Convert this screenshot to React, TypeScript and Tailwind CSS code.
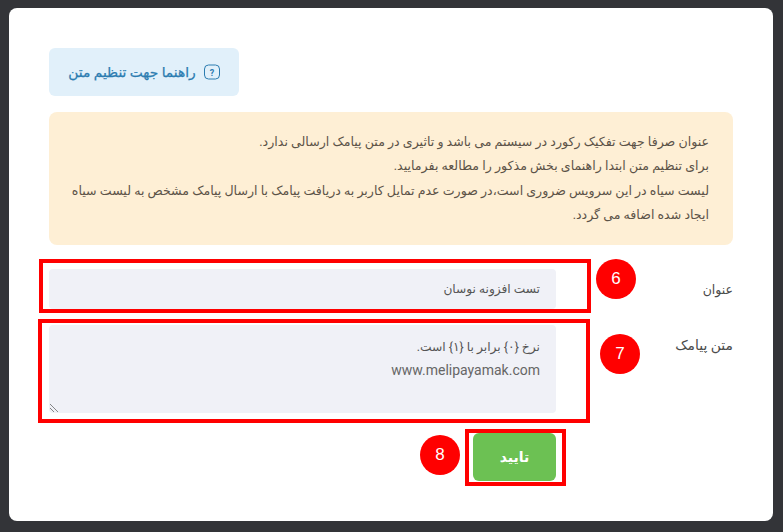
export default function App() {
  const font = "font-['Roboto','DejaVu_Sans',sans-serif]";
  return (
    <div dir="rtl" className={`relative w-[783px] h-[532px] overflow-hidden bg-[#333438] pt-2 pl-[9px] pr-[10px] pb-[11px] ${font}`}>
      <div className="h-full rounded-[8px] bg-white pt-10 pl-10 pr-10 pb-10">
        <div dir="ltr" className="flex">
          <div dir="rtl" className="flex h-12 w-[190px] items-center justify-center gap-2 rounded-[6px] bg-[#e1f0fa] text-[13.8px] text-[#2b7cb0] [-webkit-text-stroke:0.25px_#2b7cb0]">
            <svg className="shrink-0" width="16" height="16" viewBox="0 0 16 16" fill="none" stroke="#2b7cb0">
              <rect x="0.5" y="1" width="15" height="14" rx="4" strokeWidth="1" />
              <text x="8" y="11.5" fontSize="9" fontWeight="700" fill="#2b7cb0" stroke="none" textAnchor="middle">?</text>
            </svg>
            <span>راهنما جهت تنظیم متن</span>
          </div>
        </div>
        <div className="mt-4 rounded-[8px] bg-[#feefd5] pr-6 pl-4 py-[17.5px] text-[12.6px] leading-[24.5px] text-[#5c5348]">
          <p>عنوان صرفا جهت تفکیک رکورد در سیستم می باشد و تاثیری در متن پیامک ارسالی ندارد.</p>
          <p>برای تنظیم متن ابتدا راهنمای بخش مذکور را مطالعه بفرمایید.</p>
          <p>لیست سیاه در این سرویس ضروری است،در صورت عدم تمایل کاربر به دریافت پیامک با ارسال پیامک مشخص به لیست سیاه ایجاد شده اضافه می گردد.</p>
        </div>
        <div className="mt-6 flex">
          <label className="w-[177px] pt-[9px] text-[12.5px] leading-6 text-[#4a4a4a]">عنوان</label>
          <div className="flex h-10 w-[507px] items-center rounded-[4px] bg-[#f0f1f7] px-4 text-[12.2px] text-[#555]">تست افزونه نوسان</div>
        </div>
        <div className="mt-4 flex">
          <label className="w-[177px] pt-2 text-[13.9px] leading-6 text-[#4a4a4a]">متن پیامک</label>
          <div className="relative h-[88px] w-[507px] rounded-[4px] bg-[#f0f1f7] px-4 py-[11px] text-[12.3px] leading-[23px] text-[#555]">
            <p>نرخ {"{۰}"} برابر با {"{۱}"} است.</p>
            <p className="font-['Roboto',sans-serif] text-[14px] text-[#666]">www.melipayamak.com</p>
            <svg className="absolute bottom-0 left-0" width="10" height="10" viewBox="0 0 10 10" stroke="#555" strokeWidth="1">
              <path d="M1 1L9 9M1 5L5 9" strokeDasharray="1 0.4" />
            </svg>
          </div>
        </div>
        <div className="mt-5 flex pr-[177px]">
          <button className="h-12 w-[83px] rounded-[6px] bg-[#6cc153] text-[14px] font-bold text-white">تایید</button>
        </div>
      </div>

      <div className="absolute left-[39px] top-[259px] h-[54px] w-[552px] border-4 border-[#ff0000]" />
      <div className="absolute left-[38px] top-[319px] h-[104px] w-[552px] border-4 border-[#ff0000]" />
      <div className="absolute left-[465px] top-[429px] h-[57px] w-[101px] border-4 border-[#ff0000]" />
      <div className="absolute left-[596px] top-[259px] flex h-10 w-10 items-center justify-center rounded-full bg-[#ff0000] font-['Liberation_Sans',sans-serif] text-[17px] text-white">6</div>
      <div className="absolute left-[600px] top-[334px] flex h-10 w-10 items-center justify-center rounded-full bg-[#ff0000] font-['Liberation_Sans',sans-serif] text-[17px] text-white">7</div>
      <div className="absolute left-[420px] top-[435px] flex h-10 w-10 items-center justify-center rounded-full bg-[#ff0000] font-['Liberation_Sans',sans-serif] text-[17px] text-white">8</div>
    </div>
  );
}
